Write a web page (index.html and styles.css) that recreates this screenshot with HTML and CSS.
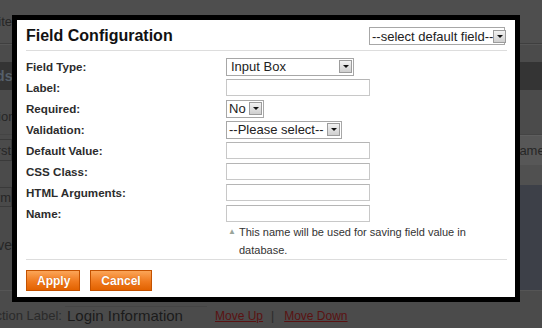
FILE: index.html
```html
<!DOCTYPE html>
<html lang="en">
<head>
    <meta charset="UTF-8">
    <title>Field Configuration</title>
    <link rel="stylesheet" href="styles.css">
</head>
<body>
    <!-- page behind the overlay -->
    <div class="page">
        <div class="strip top"><span class="cut">Site</span></div>
        <div class="strip blank"></div>
        <div class="strip band"><span class="cut bold">Fields</span></div>
        <div class="strip plain"><span class="cut low">Section</span></div>
        <div class="strip boxes"><span class="cut box">First</span><span class="side">Name</span></div>
        <div class="strip thin"></div>
        <div class="strip blue">
            <div class="blue-left">
                <span class="cut box small">Form</span>
                <span class="cut check"><i></i>Save</span>
            </div>
        </div>
        <div class="strip foot">
            <span class="cut">Section Label:</span>
            <span class="fake-input">Login Information</span>
            <a href="#" class="link">Move Up</a>
            <span class="pipe">|</span>
            <a href="#" class="link">Move Down</a>
        </div>
    </div>

    <!-- dialog -->
    <div class="dialog">
        <div class="dialog-head">
            <h2>Field Configuration</h2>
            <span class="sel sel-default">--select default field--<b class="arrow"></b></span>
        </div>
        <div class="form">
            <label>Field Type:</label>
            <span class="sel sel-type">Input Box<b class="arrow"></b></span>
            <label>Label:</label>
            <span class="txt"></span>
            <label>Required:</label>
            <span class="sel sel-req">No<b class="arrow"></b></span>
            <label>Validation:</label>
            <span class="sel sel-val">--Please select--<b class="arrow"></b></span>
            <label>Default Value:</label>
            <span class="txt"></span>
            <label>CSS Class:</label>
            <span class="txt"></span>
            <label>HTML Arguments:</label>
            <span class="txt"></span>
            <label>Name:</label>
            <span class="txt"></span>
            <p class="hint"><span class="tri">&#9650;</span>This name will be used for saving field value in<br>database.</p>
        </div>
        <div class="buttons">
            <button class="btn">Apply</button>
            <button class="btn">Cancel</button>
        </div>
    </div>
</body>
</html>
```

FILE: styles.css
```css
body {
    margin: 0;
    width: 542px;
    height: 328px;
    overflow: hidden;
    background-color: #4b4b4b;
    font-family: "Liberation Sans", Arial, sans-serif;
}
/* greyed page behind the dialog */
.page {
    margin-left: -28px;
    width: 570px;
    color: #262626;
    font-size: 13px;
}
.strip {
    display: flex;
    align-items: center;
}
.cut {
    width: 40px;
    flex: none;
    text-align: right;
    white-space: nowrap;
}
.top {
    height: 44px;
    align-items: flex-start;
    padding-top: 14px;
    box-sizing: border-box;
    background-color: #4e4e4e;
    border-bottom: 1px solid #3f3f3f;
}
.blank {
    height: 17px;
    border-top: 1px solid #555;
}
.band {
    height: 28px;
    background-color: #343434;
}
.bold {
    font-weight: bold;
    color: #56606b;
    font-size: 14px;
}
.plain {
    height: 45px;
    align-items: flex-end;
    padding-bottom: 10px;
    box-sizing: border-box;
    border-bottom: 1px solid #444;
}
.boxes {
    height: 30px;
    justify-content: space-between;
}
.box {
    height: 22px;
    line-height: 22px;
    border: 1px solid #3a3a3a;
    box-sizing: border-box;
}
.side {
    width: 32px;
    height: 30px;
    line-height: 30px;
    background-color: #575757;
    border-top: 1px solid #5e5e5e;
    box-sizing: border-box;
}
.thin {
    height: 20px;
    justify-content: flex-end;
    background: linear-gradient(to right, #4b4b4b 530px, #505050 530px);
}
.blue {
    height: 105px;
    align-items: stretch;
    background: linear-gradient(to right, #4a4a4a 540px, #3d4048 540px);
}
.blue-left {
    display: flex;
    flex-direction: column;
    gap: 30px;
    padding-top: 2px;
}
.small {
    height: 20px;
    line-height: 20px;
}
.check {
    display: flex;
    justify-content: flex-end;
    align-items: center;
    font-size: 14px;
}
.check i {
    display: inline-block;
    width: 9px;
    height: 9px;
    border: 1px solid #2e2e2e;
    margin-right: 1px;
}
.foot {
    height: 38px;
    padding-top: 12px;
    box-sizing: border-box;
    align-items: center;
    border-top: 1px solid #555;
    font-size: 13px;
}
.foot .cut {
    width: 90px;
    color: #2a2a2a;
}
.fake-input {
    width: 140px;
    margin-left: 3px;
    padding-left: 2px;
    font-size: 15px;
    color: #1b1b1b;
    border-top: 1px solid #444;
    line-height: 18px;
}
.link {
    color: #5a1212;
    font-size: 12px;
    margin-left: 8px;
}
.pipe {
    margin: 0 2px 0 8px;
    font-size: 12px;
    color: #2a2a2a;
}

/* dialog */
.dialog {
    position: absolute;
    left: 12px;
    top: 15px;
    width: 498px;
    height: 277px;
    border: 5px solid #000;
    background-color: #fff;
    color: #2c2c2c;
}
.dialog-head {
    display: flex;
    justify-content: space-between;
    align-items: center;
    margin: 0 8px 0 9px;
    padding: 6px 2px 4px 0;
    border-bottom: 1px solid #ddd;
}
h2 {
    margin: 0;
    font-size: 16px;
    line-height: 20px;
    color: #111;
}
.sel {
    display: flex;
    align-items: center;
    justify-content: space-between;
    height: 18px;
    box-sizing: border-box;
    padding: 0 1px 0 4px;
    border: 1px solid #a7a7a7;
    font-size: 13px;
    color: #222;
    white-space: nowrap;
}
.sel-default {
    width: 136px;
    padding-left: 2px;
}
.sel-type {
    width: 128px;
}
.sel-req {
    width: 38px;
    padding-left: 2px;
}
.sel-val {
    width: 116px;
    padding-left: 2px;
}
.arrow {
    flex: none;
    width: 13px;
    height: 13px;
    box-sizing: border-box;
    border: 1px solid #9c9c9c;
    background: linear-gradient(#f2f2f2, #cfcfcf);
    position: relative;
}
.arrow::after {
    content: "";
    position: absolute;
    left: 3px;
    top: 4px;
    border-left: 3px solid transparent;
    border-right: 3px solid transparent;
    border-top: 3px solid #111;
}
.form {
    display: grid;
    grid-template-columns: 200px 1fr;
    grid-template-rows: repeat(8, 21px) auto;
    align-items: center;
    margin: 5px 8px 0 9px;
}
.form label {
    font-size: 11.6px;
    font-weight: bold;
    color: #2c2c2c;
}
.form .sel {
    justify-self: start;
}
.txt {
    width: 144px;
    height: 17px;
    box-sizing: border-box;
    border: 1px solid #c8c8c8;
    border-top-color: #b5b5b5;
}
.hint {
    grid-column: 2;
    align-self: start;
    margin: -1px 0 0;
    padding-left: 13px;
    position: relative;
    font-size: 11px;
    line-height: 18px;
    color: #333;
}
.tri {
    position: absolute;
    left: 2px;
    top: 0;
    font-size: 8px;
    color: #9aa59a;
}
.buttons {
    display: flex;
    gap: 10px;
    margin: 0 8px 0 9px;
    padding-top: 10px;
    border-top: 1px solid #ddd;
}
.btn {
    height: 21px;
    padding: 0 10px;
    border: 1px solid #c45200;
    background: linear-gradient(#fba558, #f07a1e 55%, #e26200);
    color: #fff;
    font-family: "Liberation Sans", Arial, sans-serif;
    font-size: 12px;
    font-weight: bold;
    text-shadow: 0 0 1px #c05000;
}
.btn:first-child {
    width: 54px;
}
.btn:last-child {
    width: 62px;
}
```
